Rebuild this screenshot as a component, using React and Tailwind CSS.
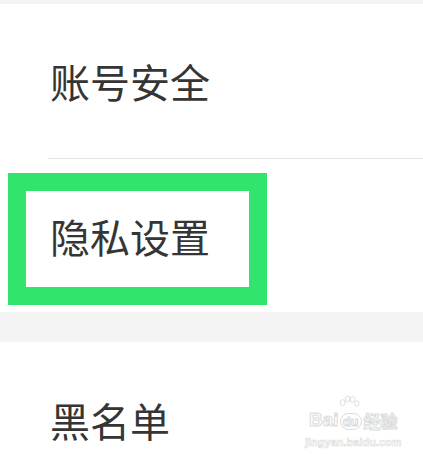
import React from 'react';

const font = { fontFamily: '"Noto Sans CJK SC", "Noto Sans", sans-serif' };

const Row = ({ label, className = '' }) => (
  <div className={`flex items-center pl-[50px] ${className}`}>
    <span className="text-[40px] leading-none text-[#353535]">{label}</span>
  </div>
);

// faint baidu jingyan watermark in the corner
const Watermark = () => (
  <div className="absolute left-[305px] top-[410px] flex flex-col items-center select-none">
    <div className="flex items-end gap-[1px] font-['Liberation_Sans',sans-serif] text-[19px] font-bold leading-none [-webkit-text-stroke:1px_#dadada] text-white">
      <span>Bai</span>
      <span className="relative">
        <svg width="22" height="17" viewBox="0 0 24 18" className="absolute -top-[15px] -left-[2px]" fill="none" stroke="#dadada" strokeWidth="1">
          <ellipse cx="5" cy="8" rx="2.6" ry="3.2" />
          <ellipse cx="10.5" cy="4" rx="2.6" ry="3.2" />
          <ellipse cx="16" cy="4.5" rx="2.6" ry="3.2" />
          <ellipse cx="20.5" cy="9" rx="2.4" ry="3" />
        </svg>
        <span className="rounded-full border border-[#dadada] px-[2px] text-[13px]">du</span>
      </span>
      <span className="ml-[1px] text-[17px]" style={font}>经验</span>
    </div>
    <div className="mt-[8px] font-['Liberation_Sans',sans-serif] text-[11px] font-bold leading-none text-white [-webkit-text-stroke:0.6px_#dadada]">jingyan.baidu.com</div>
  </div>
);

export default function App() {
  return (
    <div className="relative w-[423px] h-[464px] overflow-hidden bg-white" style={font}>
      <div className="h-[4px] bg-[#f4f4f4]" />
      <Row label="账号安全" className="h-[154px]" />
      <div className="ml-[48px] h-px bg-[#e4e4e4]" />
      <div className="relative">
        <Row label="隐私设置" className="h-[153px]" />
        <div className="absolute left-[8px] top-[14px] w-[259px] h-[132px] border-[18px] border-[#31e56c]" />
      </div>
      <div className="h-[30px] bg-[#f4f4f4]" />
      <Row label="黑名单" className="h-[156px]" />
      <Watermark />
    </div>
  );
}
